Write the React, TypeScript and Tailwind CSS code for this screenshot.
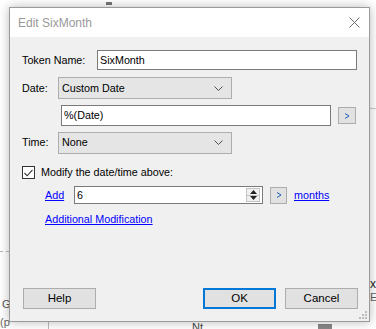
import React from "react";

const Chevron = () => (
  <svg width="9" height="5" viewBox="0 0 9 5" className="block">
    <path d="M0.5 0.5 L4.5 4.5 L8.5 0.5" fill="none" stroke="#505050" strokeWidth="1" />
  </svg>
);

const Select = ({ value }: { value: string }) => (
  <div className="w-[174px] h-[22px] border border-[#adadad] bg-[#e5e5e5] flex items-center pl-[3px] pr-[8px]">
    <span className="flex-1">{value}</span>
    <Chevron />
  </div>
);

const SmallBtn = ({ w, h }: { w: string; h: string }) => (
  <div className={`${w} ${h} border border-[#adadad] bg-[#e1e1e1] flex items-center justify-center`}>
    <svg width="6" height="6" viewBox="0 0 6 6">
      <path d="M1 0.5 L5 3 L1 5.5" fill="none" stroke="#1a5fb4" strokeWidth="1" />
    </svg>
  </div>
);

const Btn = ({ label, primary }: { label: string; primary?: boolean }) => (
  <div
    className={`w-[73px] h-[21px] flex items-center justify-center bg-[#e1e1e1] text-[11.5px] ${
      primary ? "border-2 border-[#0078d7]" : "border border-[#adadad]"
    }`}
  >
    {label}
  </div>
);

export default function App() {
  return (
    <div
      className="relative w-[376px] h-[329px] bg-white overflow-hidden text-[10.75px] text-black"
      style={{ fontFamily: '"Liberation Sans", Arial, sans-serif' }}
    >
      {/* background fragments behind the dialog */}
      <div className="absolute left-[106px] top-[2px] w-[6px] h-[3px] bg-[#777]" />
      <div className="absolute left-0 top-[251px] w-[9px] border-t border-dashed border-[#bbb]" />
      <div className="absolute left-[366px] top-[108px] w-[10px] border-t border-[#ccc]" />
      <div className="absolute left-[370px] top-[275px] text-[12px] text-[#222]">x</div>
      <div className="absolute left-[370px] top-[289px] text-[11px] text-[#666]">E</div>
      <div className="absolute left-[2px] top-[296px] text-[11px] text-[#555]">G</div>
      <div className="absolute left-[0px] top-[314px] text-[11px] text-[#666]">(p</div>
      <div className="absolute left-[48px] top-[322px] h-[7px] border-l border-[#bbb]" />
      <div className="absolute left-[192px] top-[322px] h-[7px] w-[14px] overflow-hidden">
        <div className="text-[11px] text-[#444] leading-[11px]">Nt</div>
      </div>
      <div className="absolute left-[318px] top-[324px] w-[14px] h-[5px] bg-[#888]" />

      <div className="pl-[9px] pt-[7px]">
        <div className="relative w-[361px] h-[315px] border border-[#9a9a9a] bg-[#f0f0f0] flex flex-col shadow-[0_0_10px_rgba(0,0,0,0.28)]">
          {/* title bar */}
          <div className="h-[29px] bg-white flex items-center pl-[8px] pr-[9px]">
            <span className="flex-1 text-[12px] text-[#999]">Edit SixMonth</span>
            <svg width="11" height="11" viewBox="0 0 11 11">
              <path d="M0.5 0.5 L10.5 10.5 M10.5 0.5 L0.5 10.5" stroke="#6e6e6e" strokeWidth="1" />
            </svg>
          </div>

          {/* body */}
          <div className="flex-1 flex flex-col pl-[12px] pt-[13px]">
            <div className="flex items-center h-[20px]">
              <span className="w-[75px]">Token Name:</span>
              <div className="w-[260px] h-[20px] border border-[#7a7a7a] bg-white flex items-center pl-[2px]">SixMonth</div>
            </div>

            <div className="flex items-center h-[22px] mt-[7px]">
              <span className="w-[36px]">Date:</span>
              <Select value="Custom Date" />
            </div>

            <div className="flex items-center h-[21px] mt-[6px] pl-[39px]">
              <div className="w-[270px] h-[21px] border border-[#7a7a7a] bg-white flex items-center pl-[2px]">%(Date)</div>
              <div className="ml-[7px]">
                <SmallBtn w="w-[18px]" h="h-[17px]" />
              </div>
            </div>

            <div className="flex items-center h-[21px] mt-[6px]">
              <span className="w-[36px]">Time:</span>
              <Select value="None" />
            </div>

            <div className="flex items-center h-[13px] mt-[13px]">
              <div className="w-[13px] h-[13px] border border-[#333] bg-white flex items-center justify-center">
                <svg width="9" height="8" viewBox="0 0 9 8">
                  <path d="M0.5 4 L3.2 6.8 L8.5 0.8" fill="none" stroke="#333" strokeWidth="1.1" />
                </svg>
              </div>
              <span className="ml-[6px]">Modify the date/time above:</span>
            </div>

            <div className="flex items-center h-[18px] mt-[7px] pl-[23px]">
              <span className="w-[29px] text-[#0000ff] underline">Add</span>
              <div className="w-[189px] h-[18px] border border-[#7a7a7a] bg-white flex items-center pl-[2px] pr-[2px]">
                <span className="flex-1">6</span>
                <div className="w-[14px] h-[14px] border border-[#c4c4c4] bg-[#f0f0f0] flex flex-col">
                  <div className="flex-1 flex items-center justify-center border-b border-[#c4c4c4]">
                    <svg width="7" height="4" viewBox="0 0 7 4"><path d="M0 4 L3.5 0 L7 4 Z" fill="#222" /></svg>
                  </div>
                  <div className="flex-1 flex items-center justify-center">
                    <svg width="7" height="4" viewBox="0 0 7 4"><path d="M0 0 L3.5 4 L7 0 Z" fill="#222" /></svg>
                  </div>
                </div>
              </div>
              <div className="ml-[7px]">
                <SmallBtn w="w-[17px]" h="h-[17px]" />
              </div>
              <span className="ml-[7px] text-[#0000ff] underline">months</span>
            </div>

            <div className="flex items-center h-[13px] mt-[9px] pl-[23px]">
              <span className="text-[#0000ff] underline">Additional Modification</span>
            </div>

            <div className="mt-auto mb-[12px] flex items-center pl-[1px] pr-[11px]">
              <Btn label="Help" />
              <div className="flex-1" />
              <Btn label="OK" primary />
              <div className="w-[9px]" />
              <Btn label="Cancel" />
            </div>
          </div>

          {/* resize grip */}
          <svg className="absolute right-[2px] bottom-[2px]" width="8" height="8" viewBox="0 0 8 8">
            <rect x="6" y="0" width="2" height="2" fill="#bdbdbd" />
            <rect x="3" y="3" width="2" height="2" fill="#bdbdbd" />
            <rect x="6" y="3" width="2" height="2" fill="#bdbdbd" />
            <rect x="0" y="6" width="2" height="2" fill="#bdbdbd" />
            <rect x="3" y="6" width="2" height="2" fill="#bdbdbd" />
            <rect x="6" y="6" width="2" height="2" fill="#bdbdbd" />
          </svg>
        </div>
      </div>
    </div>
  );
}
